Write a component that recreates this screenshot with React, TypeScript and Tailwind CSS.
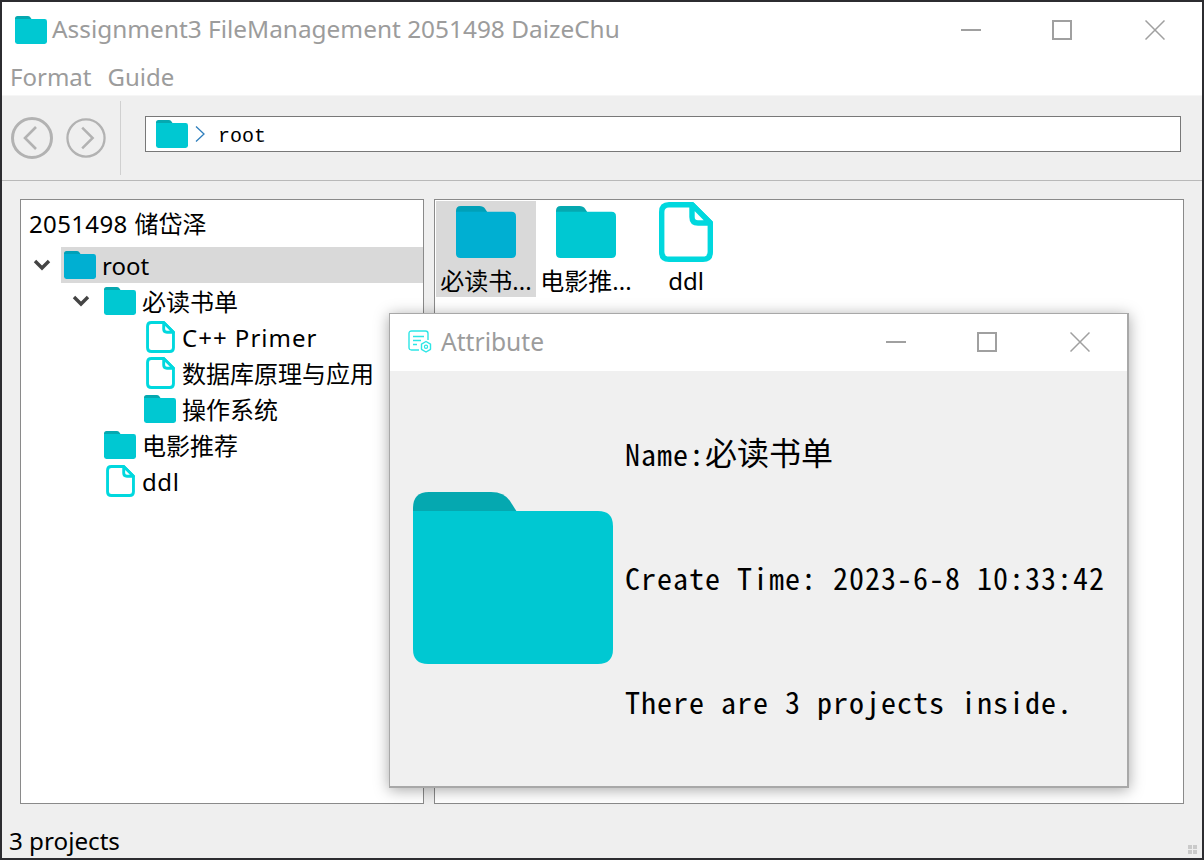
const sans = "font-['Noto_Sans','Noto_Sans_CJK_SC',sans-serif]";

type Tone = "normal" | "selected";

const FolderIcon = ({ className, tone = "normal" }: { className: string; tone?: Tone }) => (
  <svg viewBox="0 0 200 172" className={className} preserveAspectRatio="none">
    <path
      d="M0 20 V16 Q0 0 16 0 H78 Q91 0 97 9 L104 20 Z"
      fill={tone === "selected" ? "#00a0b8" : "#05a8b0"}
    />
    <path
      d="M0 19 H185 Q200 19 200 34 V157 Q200 172 185 172 H15 Q0 172 0 157 Z"
      fill={tone === "selected" ? "#00afd2" : "#00c8d2"}
    />
  </svg>
);

const FileIcon = ({ className }: { className: string }) => (
  <svg viewBox="0 0 54 60" className={className}>
    <path
      d="M10 2.7 H33 L51.3 21 V50 Q51.3 57.3 44 57.3 H10 Q2.7 57.3 2.7 50 V10 Q2.7 2.7 10 2.7 Z"
      fill="#fff"
      stroke="#00d8de"
      strokeWidth="5.4"
      strokeLinejoin="round"
    />
    <path d="M33 2.7 V15 Q33 21 39 21 H51.3 Z" fill="#fff" stroke="#00d8de" strokeWidth="5.4" strokeLinejoin="round" />
  </svg>
);

const Chevron = () => (
  <svg viewBox="0 0 18 12" className="h-3 w-[18px]">
    <path d="M2 2 L9 9 L16 2" fill="none" stroke="#444" strokeWidth="3.4" />
  </svg>
);

const WindowButtons = () => (
  <div className="flex items-center">
    <div className="flex h-5 w-5 items-center justify-center">
      <div className="h-[2px] w-5 bg-[#a0a0a0]" />
    </div>
    <div className="ml-[71px] h-5 w-5 border-2 border-[#a0a0a0]" />
    <svg viewBox="0 0 20 20" className="ml-[73px] h-5 w-5">
      <path d="M0.5 0.5 L19.5 19.5 M19.5 0.5 L0.5 19.5" stroke="#a0a0a0" strokeWidth="1.5" />
    </svg>
  </div>
);

const NavButton = ({ dir, large }: { dir: "left" | "right"; large?: boolean }) => (
  <svg viewBox="0 0 42 42" className={large ? "h-[42px] w-[42px]" : "h-10 w-10"}>
    <circle cx="21" cy="21" r="19.5" fill="none" stroke="#b2b2b2" strokeWidth={large ? 3 : 2.4} />
    <path
      d={dir === "left" ? "M25 10 L14 21 L25 32" : "M17 10 L28 21 L17 32"}
      fill="none"
      stroke="#b2b2b2"
      strokeWidth="2.6"
    />
  </svg>
);

const tree = [
  { label: "必读书单", type: "folder", rowClass: "pl-[79px]", open: true },
  { label: "C++ Primer", type: "file", rowClass: "pl-[119px]", labelClass: "tracking-[1px]" },
  { label: "数据库原理与应用", type: "file", rowClass: "pl-[119px]" },
  { label: "操作系统", type: "folder", rowClass: "pl-[119px]" },
  { label: "电影推荐", type: "folder", rowClass: "pl-[79px]" },
  { label: "ddl", type: "file", rowClass: "pl-[79px]", labelClass: "tracking-[0.6px]" }
];

const files = [
  { label: "必读书...", type: "folder", selected: true },
  { label: "电影推...", type: "folder" },
  { label: "ddl", type: "file" }
];

export default function App() {
  return (
    <div className={`h-[860px] w-[1204px] overflow-hidden bg-[#2c2c30] p-[2px] ${sans}`}>
      <div className="relative flex h-full flex-col bg-[#efefef] text-[24px] text-black">
        {/* title bar */}
        <div className="flex h-[52px] items-center bg-white pl-[13px] pr-[37px] pt-[3px]">
          <FolderIcon className="h-7 w-8" />
          <span className="ml-[5px] text-[24.4px] leading-none text-[#9c9c9c]">
            Assignment3 FileManagement 2051498 DaizeChu
          </span>
          <div className="ml-auto">
            <WindowButtons />
          </div>
        </div>

        {/* menu */}
        <div className="flex h-[42px] items-center gap-4 border-b border-[#f6f6f6] bg-white pl-2 pt-1 text-[#9c9c9c]">
          <span>Format</span>
          <span>Guide</span>
        </div>

        {/* toolbar */}
        <div className="flex h-[85px] items-center border-b border-[#b9b9b9]">
          <div className="ml-[9px] flex w-[109px] items-center">
            <NavButton dir="left" large />
            <div className="ml-[13px]">
              <NavButton dir="right" />
            </div>
          </div>
          <div className="h-[74px] w-px bg-[#d0d0d0]" />
          <div className="mb-2 ml-6 flex h-9 w-[1036px] items-center border border-[#787878] bg-white pl-[10px]">
            <FolderIcon className="h-7 w-8" />
            <svg viewBox="0 0 12 18" className="ml-[6px] h-[18px] w-3">
              <path d="M2 1.5 L10 9 L2 16.5" fill="none" stroke="#2f7fbd" strokeWidth="1.3" />
            </svg>
            <span className="ml-3 pt-[6px] font-['Liberation_Mono',monospace] text-[20px] leading-none">root</span>
          </div>
        </div>

        {/* panels */}
        <div className="flex flex-1 gap-[10px] pl-[18px] pt-[18px]">
          <div className="w-[404px] border border-[#8a8a8a] bg-white">
            <div className="flex h-[47px] items-center pl-2 leading-none">
              <span className="tracking-[0.35px]">2051498</span>
              <span className="ml-[7px]">储岱泽</span>
            </div>
            <div className="flex h-9 items-center">
              <div className="flex w-10 justify-center pl-[1px]">
                <Chevron />
              </div>
              <div className="flex h-full flex-1 items-center bg-[#d9d9d9] pl-[3px]">
                <FolderIcon className="h-7 w-8" tone="selected" />
                <span className="ml-[6px] pt-[2px] leading-none">root</span>
              </div>
            </div>
            {tree.map((node) => (
              <div key={node.label} className="relative flex h-9 items-center">
                {node.open && (
                  <div className="absolute left-[51px] top-[12px]">
                    <Chevron />
                  </div>
                )}
                <div className={`flex items-center ${node.rowClass}`}>
                  <div className="flex w-9 justify-center pl-1">
                    {node.type === "folder" ? <FolderIcon className="h-7 w-8" /> : <FileIcon className="h-[32px] w-[29px]" />}
                  </div>
                  <span className={`ml-[6px] pt-[2px] leading-none ${node.labelClass ?? ""}`}>{node.label}</span>
                </div>
              </div>
            ))}
          </div>

          <div className="flex w-[750px] items-start border border-[#8a8a8a] bg-white p-px">
            {files.map((f) => (
              <div
                key={f.label}
                className={`flex h-24 w-[100px] flex-col items-center pt-[5px] ${f.selected ? "bg-[#d9d9d9]" : ""}`}
              >
                <div className="flex h-[52px] items-center">
                  {f.type === "folder" ? (
                    <FolderIcon className="h-[52px] w-[60px]" tone={f.selected ? "selected" : "normal"} />
                  ) : (
                    <FileIcon className="h-[60px] w-[54px]" />
                  )}
                </div>
                <span className="mt-[11px] whitespace-nowrap leading-none">{f.label}</span>
              </div>
            ))}
          </div>
        </div>

        {/* status bar */}
        <div className="relative flex h-[54px] items-center pl-[7px] pt-5 text-[24.2px] leading-none">
          3 projects
          <div className="absolute bottom-[4px] right-[5px] grid grid-cols-2 gap-px">
            <div className="h-1 w-1 bg-[#cacaca]" />
            <div className="h-1 w-1 bg-[#cacaca]" />
            <div className="h-1 w-1 bg-[#cacaca]" />
            <div className="h-1 w-1 bg-[#cacaca]" />
          </div>
        </div>

        {/* attribute dialog */}
        <div className="absolute left-[387px] top-[311px] flex h-[475px] w-[740px] flex-col border border-r-2 border-b-2 border-[#a8a8a8] shadow-[0_2px_14px_rgba(0,0,0,0.35)]">
          <div className="flex h-[57px] items-center bg-white pb-[2px] pl-[18px] pr-[37px]">
            <svg viewBox="0 0 24 24" className="h-6 w-6">
              <path
                d="M11 20 H3.5 Q1 20 1 17.5 V3.5 Q1 1 3.5 1 H17.5 Q20 1 20 3.5 V10"
                fill="none"
                stroke="#2de6e6"
                strokeWidth="1.4"
              />
              <path d="M5 6.5 H16 M5 10.5 H13 M5 14.5 H9" stroke="#2de6e6" strokeWidth="1.4" />
              <path
                d="M18 11.5 L22.5 14.2 V19.3 L18 22 L13.5 19.3 V14.2 Z"
                fill="#fff"
                stroke="#2de6e6"
                strokeWidth="1.4"
                strokeLinejoin="round"
              />
              <circle cx="18" cy="16.7" r="1.6" fill="none" stroke="#2de6e6" strokeWidth="1.2" />
            </svg>
            <span className="ml-[9px] pt-[2px] text-[24.6px] leading-none text-[#9c9c9c]">Attribute</span>
            <div className="ml-auto">
              <WindowButtons />
            </div>
          </div>
          <div className="flex flex-1 items-center bg-[#f0f0f0] pl-[23px]">
            <FolderIcon className="mb-px h-[172px] w-[200px]" />
            <div className="mb-1 ml-3 flex flex-col font-['Noto_Sans_Mono_CJK_SC','DejaVu_Sans_Mono',monospace] text-[30px] leading-none tracking-[1px]">
              <div className="flex h-[124px] items-center">
                Name:<span className={`text-[32px] tracking-normal ${sans}`}>必读书单</span>
              </div>
              <div className="flex h-[124px] items-center whitespace-pre">Create Time: 2023-6-8 10:33:42</div>
              <div className="flex h-[124px] items-center whitespace-pre">There are 3 projects inside.</div>
            </div>
          </div>
        </div>
      </div>
    </div>
  );
}
